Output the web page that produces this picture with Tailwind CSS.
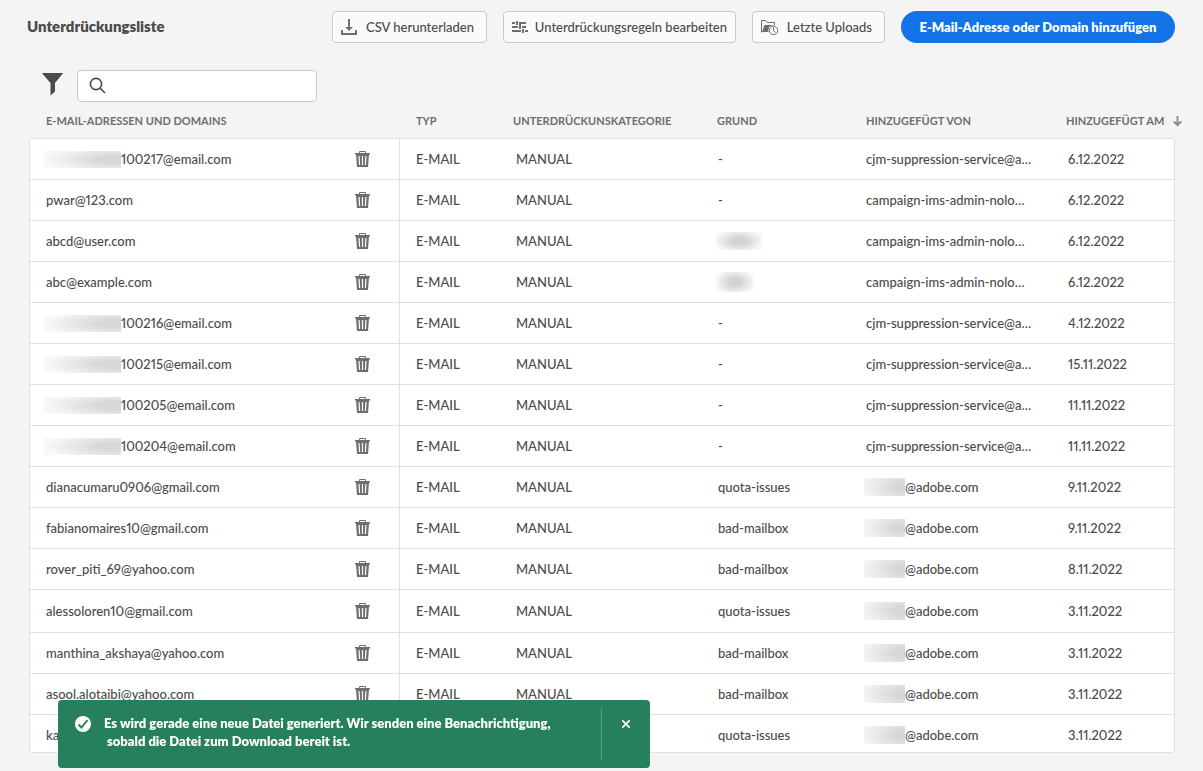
<!DOCTYPE html>
<html lang="de">
<head>
<meta charset="utf-8">
<title>Unterdrückungsliste</title>
<script src="https://cdn.jsdelivr.net/npm/@tailwindcss/browser@4"></script>
</head>
<body class="min-h-screen bg-[#f4f4f4] pb-4 pl-[29px] pr-7 pt-[11px] font-['Lato','Noto_Sans',sans-serif] text-[13px] font-medium proportional-nums leading-5 text-[#4b4b4b]">
<header class="-ml-0.5 flex h-8 items-center justify-between">
  <h1 class="pb-0.5 text-[15px] font-extrabold">Unterdrückungsliste</h1>
  <div class="flex gap-4 whitespace-nowrap">
    <button class="flex h-8 w-[155px] items-center justify-between rounded border border-[#cacaca] bg-[#fafafa] pl-2 pr-3">
      <svg class="h-4 w-4 shrink-0" viewBox="0 0 16 16" fill="#6e6e6e"><path d="M7 0h2v8h3l-4 4-4-4h3zM0 11h2v3h12v-3h2v5H0z"/></svg>
      CSV herunterladen
    </button>
    <button class="flex h-8 w-[233px] items-center justify-between rounded border border-[#cacaca] bg-[#fafafa] pl-2 pr-2">
      <svg class="h-4 w-4 shrink-0" viewBox="0 0 16 16" fill="#6e6e6e"><path d="M0 3h3v2H0zM4 2h2v4H4zM7 3h7v2H7zM0 7h6v2H0zM7 5h2v5H7zM10 7h4v2h-4zM0 11h9v2H0zM10 10h2v4h-2zM13 11h3v2h-3z"/></svg>
      Unterdrückungsregeln bearbeiten
    </button>
    <button class="flex h-8 w-[133px] items-center justify-between rounded border border-[#cacaca] bg-[#fafafa] pl-2 pr-3">
      <svg class="h-[18px] w-[18px] shrink-0" viewBox="0 0 18 18" fill="none" stroke="#6e6e6e"><path d="M.5 14.500v-12h4l2 2h7v3"/><path d="M1 14 3.500 7H14L8 9v5z" fill="#6e6e6e" stroke="none"/><circle cx="12.500" cy="12.500" r="5.200" fill="#fafafa" stroke="none"/><circle cx="12.500" cy="12.500" r="4.200"/><path d="M12.500 9.500v3.200l2 1.800"/></svg>
      Letzte Uploads
    </button>
    <button class="h-8 w-[274px] rounded-full bg-[#1473e6] font-extrabold text-white">E-Mail-Adresse oder Domain hinzufügen</button>
  </div>
</header>
<main>
  <div class="mt-[27px] flex gap-3.5 pl-[13px]">
    <button class="mt-0.5 h-6" aria-label="Filter"><svg class="h-6 w-[21px]" viewBox="0 0 21 24" fill="#4b4b4b"><path d="M.7 1h19.600c.4 0 .6.500.3.800L13 11v8.500L8.500 23.500V11L.4 1.800C.1 1.500.3 1 .7 1z"/></svg></button>
    <label class="flex h-8 w-60 items-center rounded border border-[#cacaca] bg-white pb-0.5 pl-[11px]">
      <svg class="h-[17px] w-[17px] shrink-0" viewBox="0 0 17 17" fill="none" stroke="#4b4b4b" stroke-width="1.600"><circle cx="7" cy="7" r="5.600"/><path d="m11 11 5 5"/></svg>
      <input class="w-full px-2 outline-none" type="search" aria-label="Suchen">
    </label>
  </div>
  <table class="w-full table-fixed border-separate border-spacing-0 whitespace-nowrap text-left">
    <colgroup><col><col class="w-11"><col class="w-[101px]"><col class="w-[202px]"><col class="w-[148px]"><col class="w-[202px]"><col class="w-[123px]"></colgroup>
    <thead class="text-[11px] text-[#6e6e6e]">
      <tr class="h-9 [&_th]:pt-0.5">
        <th class="pl-[17px]" colspan="2">E-MAIL-ADRESSEN UND DOMAINS</th>
        <th class="pl-[17px]">TYP</th>
        <th class="pl-[13px]">UNTERDRÜCKUNSKATEGORIE</th>
        <th class="pl-[15px]">GRUND</th>
        <th class="pl-4">HINZUGEFÜGT VON</th>
        <th class="pl-3.5"><span class="flex w-[116px] items-center justify-between">HINZUGEFÜGT AM
          <svg class="h-[11px] w-[9px]" viewBox="0 0 9 11" fill="#8e8e8e"><path d="M3.500 0h2v6.500L8 4.700l1 1.200L4.500 10.500 0 5.900l1-1.200 2.500 1.800z"/></svg></span></th>
      </tr>
    </thead>
    <tbody id="rows" class="[&_td]:border-b [&_td]:border-[#e1e1e1] [&_td]:bg-white [&_td:first-child]:border-l [&_td:last-child]:border-r [&_tr:first-child_td]:border-t [&_tr:first-child_td:first-child]:rounded-tl [&_tr:first-child_td:last-child]:rounded-tr [&_tr:last-child_td]:pt-0.5 [&_tr:last-child_td:first-child]:rounded-bl [&_tr:last-child_td:last-child]:rounded-br"></tbody>
  </table>
</main>
<div role="status" class="fixed bottom-[3px] left-[58px] flex h-[68px] w-[592px] rounded bg-[#27805c] py-2 font-extrabold leading-[18px] text-white">
  <svg class="ml-[17px] mt-2 h-4 w-4 shrink-0" viewBox="0 0 16 16"><circle cx="8" cy="8" r="8" fill="#fff"/><path d="m3.500 8.500 3 3 6-7.500" fill="none" stroke="#27805c" stroke-width="2"/></svg>
  <p class="mt-1.5 flex-1 whitespace-nowrap pl-[13px]">Es wird gerade eine neue Datei generiert. Wir senden eine Benachrichtigung,<br>&nbsp;sobald die Datei zum Download bereit ist.</p>
  <button class="flex w-[49px] justify-center border-l border-[#4fa283] pt-3" aria-label="Schließen"><svg class="h-2 w-2" viewBox="0 0 8 8" stroke="#fff" stroke-width="1.600"><path d="m0 0 8 8M8 0 0 8"/></svg></button>
</div>
<script>
const cjm = 'cjm-suppression-service@a…', camp = 'campaign-ims-admin-nolo…';
// A leading "*" marks a value whose first part is hidden; "#" hides the whole value.
const rows = [
  ['*100217@email.com', '-', cjm, '6.12.2022'],
  ['pwar@123.com', '-', camp, '6.12.2022'],
  ['abcd@user.com', '#', camp, '6.12.2022'],
  ['abc@example.com', '#', camp, '6.12.2022'],
  ['*100216@email.com', '-', cjm, '4.12.2022'],
  ['*100215@email.com', '-', cjm, '15.11.2022'],
  ['*100205@email.com', '-', cjm, '11.11.2022'],
  ['*100204@email.com', '-', cjm, '11.11.2022'],
  ['dianacumaru0906@gmail.com', 'quota-issues', '*@adobe.com', '9.11.2022'],
  ['fabianomaires10@gmail.com', 'bad-mailbox', '*@adobe.com', '9.11.2022'],
  ['rover_piti_69@yahoo.com', 'bad-mailbox', '*@adobe.com', '8.11.2022'],
  ['alessoloren10@gmail.com', 'quota-issues', '*@adobe.com', '3.11.2022'],
  ['manthina_akshaya@yahoo.com', 'bad-mailbox', '*@adobe.com', '3.11.2022'],
  ['asool.alotaibi@yahoo.com', 'bad-mailbox', '*@adobe.com', '3.11.2022'],
  ['ka', 'quota-issues', '*@adobe.com', '3.11.2022']
];
const bin = '<button class="block" aria-label="Löschen"><svg class="h-4 w-[15px]" viewBox="0 0 15 16"><path d="M4.500 2.500v-2h6v2" fill="none" stroke="#6e6e6e"/><path d="M0 2h15v1.500h-1L13 16H2L1 3.500H0z" fill="#6e6e6e"/><path d="M4 5l.6 9M7.500 5v9M11 5l-.6 9" stroke="#fff" stroke-width="1.200"/></svg></button>';
const wide = '<span class="-ml-0.5 h-[17px] w-[77px] bg-[radial-gradient(ellipse_76px_14px_at_right,#d8d8d8_30%,#f8f8f8)]"></span>';
const small = '<span class="-ml-0.5 h-[18px] w-[41px] bg-[radial-gradient(ellipse_42px_18px_at_right,#d6d6d6_20%,#f4f4f4)]"></span>';
const soft = '<span class="-ml-0.5 block h-[18px] w-[46px] bg-[radial-gradient(ellipse_25px_12px,#d4d4d4_30%,#fafafa)]"></span>';
const softShort = '<span class="-ml-0.5 block h-5 w-[38px] bg-[radial-gradient(ellipse_20px_13px,#d4d4d4_30%,#fafafa)]"></span>';
const hide = (v, m) => v[0] === '*' ? '<span class="flex items-center">' + m + v.slice(1) + '</span>' : v;
document.getElementById('rows').innerHTML = rows.map((r, i) => `<tr class="${i === 0 ? 'h-[42px]' : i === 11 ? 'h-[43px]' : i === 14 ? 'h-[38px]' : 'h-[41px]'}">
<td class="pl-4">${hide(r[0], wide)}</td><td>${i < 14 ? bin : ''}</td>
<td class="border-l pl-4">${i < 14 ? 'E-MAIL' : ''}</td><td class="pl-4">${i < 14 ? 'MANUAL' : ''}</td>
<td class="pl-4">${r[1] === '#' ? (i === 2 ? soft : softShort) : r[1]}</td>
<td class="pl-4">${hide(r[2], small)}</td><td class="pl-4">${r[3]}</td></tr>`).join('');
</script>
</body>
</html>
